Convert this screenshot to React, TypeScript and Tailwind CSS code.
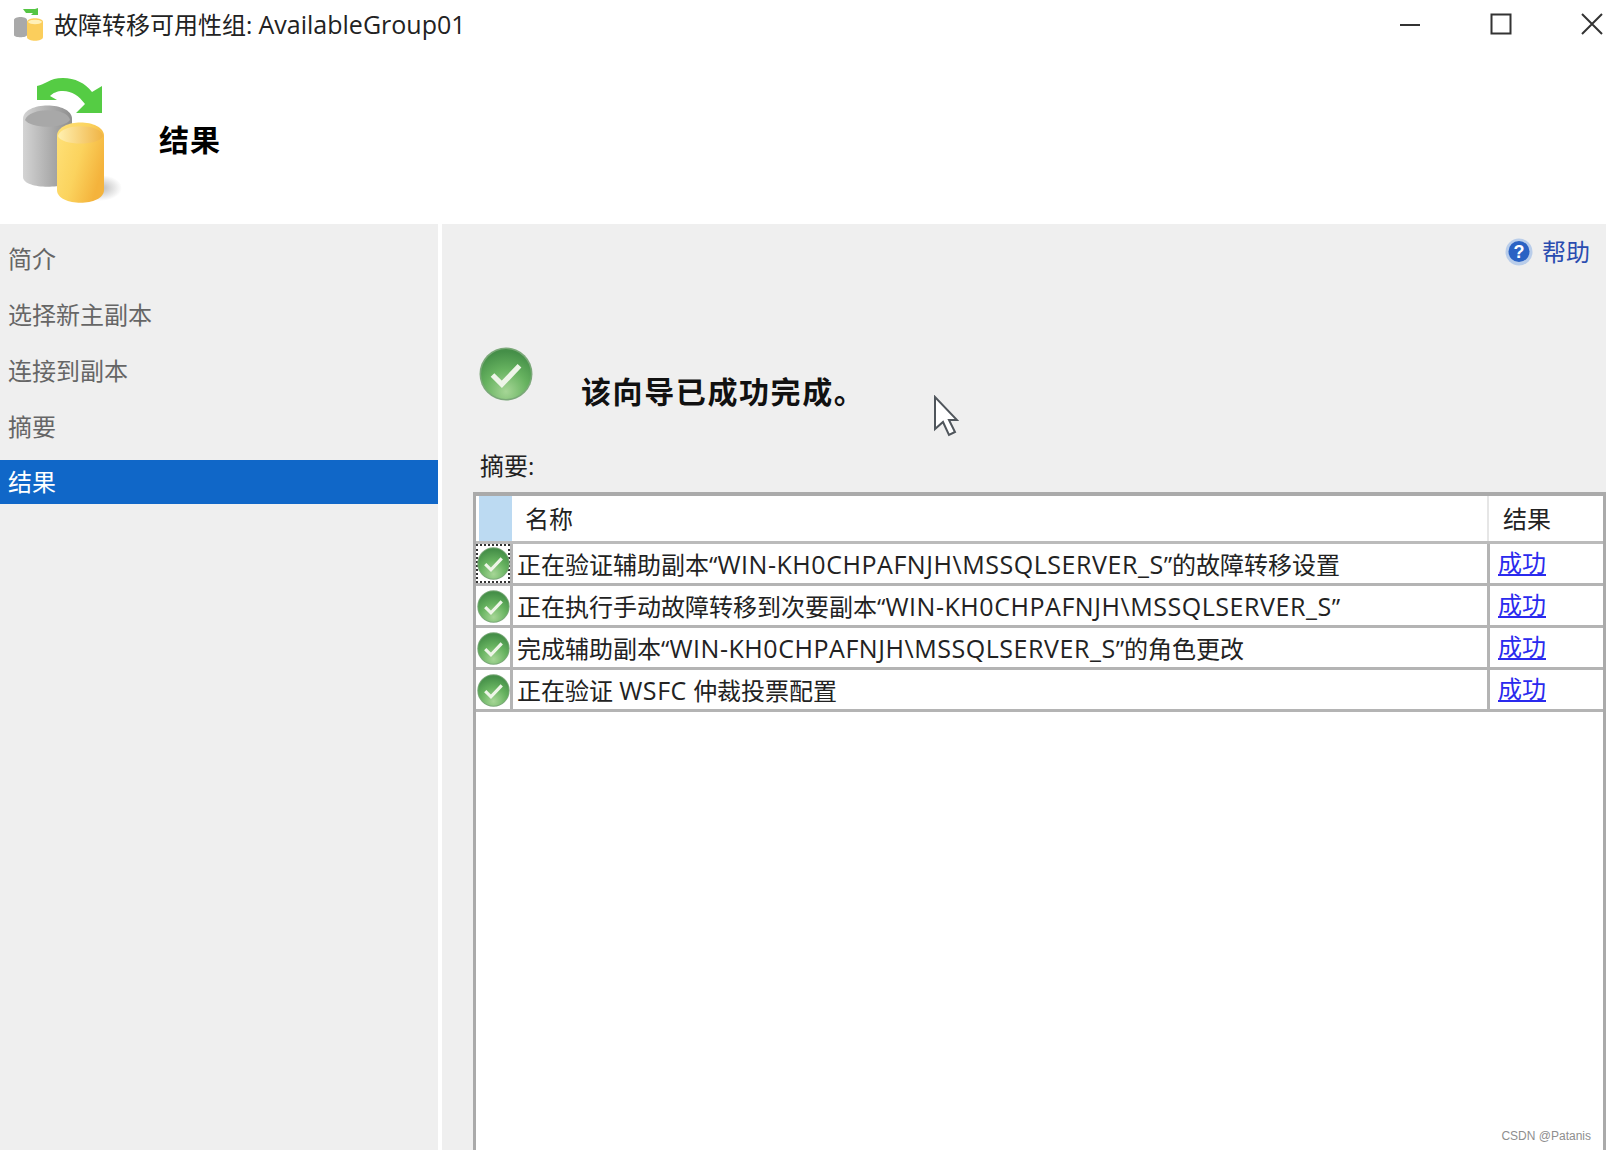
import { useId, type ReactNode } from 'react'

const steps = ['简介', '选择新主副本', '连接到副本', '摘要', '结果']

// Latin runs are set a touch larger, the original UI font is wider than Open Sans
function Latin({ children }: { children: ReactNode }) {
  return <span className="text-[25px] tracking-[0.55px]">{children}</span>
}

const server = <Latin>WIN-KH0CHPAFNJH\MSSQLSERVER_S</Latin>

const rows = [
  <>正在验证辅助副本“{server}”的故障转移设置</>,
  <>正在执行手动故障转移到次要副本“{server}”</>,
  <>完成辅助副本“{server}”的角色更改</>,
  <>正在验证 <Latin>WSFC</Latin> 仲裁投票配置</>,
]

function CheckIcon({ size }: { size: number }) {
  const id = useId()
  return (
    <svg width={size} height={size} viewBox="0 0 52 52" className="shrink-0">
      <defs>
        <radialGradient id={id} cx="50%" cy="85%" r="80%">
          <stop offset="0%" stopColor="#a6d696" />
          <stop offset="55%" stopColor="#66b25f" />
          <stop offset="100%" stopColor="#458f48" />
        </radialGradient>
      </defs>
      <circle cx="26" cy="26" r="25.5" fill="#7aa878" />
      <circle cx="26" cy="26" r="24" fill={`url(#${id})`} />
      <path d="M13 27l9 9 17-18" fill="none" stroke="#eef5e8" strokeWidth="5" />
    </svg>
  )
}

function DbIcon() {
  return (
    <svg width="100" height="130" viewBox="0 0 100 130">
      <defs>
        <linearGradient id="dbGray" x1="0" x2="1" y1="0" y2="0">
          <stop offset="0%" stopColor="#d4d4d4" />
          <stop offset="45%" stopColor="#b4b4b4" />
          <stop offset="100%" stopColor="#8d8d8d" />
        </linearGradient>
        <linearGradient id="dbYellow" x1="0" x2="1" y1="0" y2="0.5">
          <stop offset="0%" stopColor="#ffe27a" />
          <stop offset="55%" stopColor="#fbd35e" />
          <stop offset="100%" stopColor="#f4b33c" />
        </linearGradient>
        <linearGradient id="dbTop" x1="0" x2="1" y1="0" y2="0">
          <stop offset="0%" stopColor="#fff0b0" />
          <stop offset="100%" stopColor="#f0b445" />
        </linearGradient>
        <radialGradient id="dbShadow">
          <stop offset="0%" stopColor="#9a9a9a" stopOpacity="0.7" />
          <stop offset="100%" stopColor="#9a9a9a" stopOpacity="0" />
        </radialGradient>
      </defs>
      <ellipse cx="78" cy="112" rx="22" ry="13" fill="url(#dbShadow)" />
      <path d="M1 43c0-18 49-18 49 0v58c0 13-49 13-49 0z" fill="url(#dbGray)" />
      <path d="M3 44c4-13 43-13 45 0c-6 9-39 9-45 0z" fill="#a8a8a8" />
      <path d="M35 60c0-18 47-18 47 0v54c0 17-47 17-47 0z" fill="url(#dbYellow)" />
      <path d="M36 60c3-13 43-13 45 0c-3 10-42 10-45 0z" fill="url(#dbTop)" />
      <path d="M15 10c8-1 12-8 26-8c12 0 22 5 29 14l10-6v27H54l9-9c-6-8-13-13-22-13c-6 0-10 2-13 5l7 4H15z" fill="#55cc44" />
    </svg>
  )
}

function TitleIcon() {
  return (
    <svg width="31" height="34" viewBox="0 0 31 34">
      <path d="M10 2h12l3-1v7h-7l2-2h-7z" fill="#55c544" />
      <path d="M1 13c0-4 13-4 13 0v15c0 3-13 3-13 0z" fill="#a9a9a9" />
      <path d="M14 15c0-5 16-5 16 0v15c0 5-16 5-16 0z" fill="#fbce5c" />
      <path d="M15 15c1-3 13-3 14 0c-2 3-12 3-14 0z" fill="#fff0b8" />
    </svg>
  )
}

function CursorIcon() {
  return (
    <svg width="26" height="42" viewBox="0 0 26 42">
      <path d="M2 2v32l8-7 6 13 6-3-6-12h8z" fill="#fff" stroke="#50565c" strokeWidth="2" />
    </svg>
  )
}

function HelpIcon() {
  return (
    <svg width="28" height="28" viewBox="0 0 28 28">
      <circle cx="14" cy="14" r="13.5" fill="#b9cdea" />
      <circle cx="14" cy="13.5" r="10.5" fill="#2a62c4" />
      <text x="14" y="20" textAnchor="middle" fontSize="18" fontWeight="700" fill="#fff" fontFamily="Liberation Sans">?</text>
    </svg>
  )
}

export default function App() {
  return (
    <div className="relative flex h-[1150px] w-full flex-col overflow-hidden bg-white font-['Open_Sans','Noto_Sans_CJK_SC',sans-serif] text-[24px] leading-none text-[#222]">
      {/* title bar */}
      <div className="flex h-[50px] items-center pb-[2px] pl-[13px]">
        <div className="mr-[10px]">
          <TitleIcon />
        </div>
        <span>故障转移可用性组: <span className="text-[25px]">AvailableGroup01</span></span>
        <div className="ml-auto flex items-center">
          <svg width="22" height="22" viewBox="0 0 22 22" className="mr-[69px]">
            <path d="M1 12h20" stroke="#333" strokeWidth="2" />
          </svg>
          <svg width="22" height="22" viewBox="0 0 22 22" className="mr-[69px]">
            <rect x="1.5" y="1.5" width="19" height="19" fill="none" stroke="#333" strokeWidth="2" />
          </svg>
          <svg width="22" height="22" viewBox="0 0 22 22" className="mr-[3px]">
            <path d="M1 1l20 20M21 1L1 21" stroke="#333" strokeWidth="2" />
          </svg>
        </div>
      </div>

      {/* wizard header */}
      <div className="flex h-[174px] items-start pl-[22px] pt-[26px]">
        <DbIcon />
        <span className="ml-[37px] mt-[49px] text-[30px] font-bold tracking-[1px] text-black">结果</span>
      </div>

      <div className="flex min-h-0 flex-1 gap-1">
        {/* step list */}
        <div className="flex w-[438px] shrink-0 flex-col gap-3 bg-[#efefef] pt-[13px]">
          {steps.map((step, i) => (
            <div
              key={step}
              className={
                i === 4
                  ? '-mt-px flex h-[44px] items-center bg-[#1067c8] pl-2 text-white'
                  : 'flex h-[44px] items-center pl-2 text-[#666]'
              }
            >
              {step}
            </div>
          ))}
        </div>

        {/* results panel */}
        <div className="flex min-w-0 flex-1 flex-col bg-[#efefef] pl-[31px]">
          <div className="mt-[14px] flex h-[28px] items-center justify-end gap-[9px] pr-4 text-[#2a4cb0]">
            <HelpIcon />
            <span>帮助</span>
          </div>
          <div className="mt-[81px] flex h-[52px] items-start pl-[6px]">
            <CheckIcon size={54} />
            <span className="ml-[48px] mt-[30px] whitespace-nowrap text-[30px] font-bold tracking-[1.6px] text-[#111]">该向导已成功完成。</span>
          </div>
          <div className="mt-[53px] pl-[7px] leading-[28px]">摘要:</div>

          <div className="mt-[12px] flex min-h-0 flex-1 flex-col border-x-[3px] border-t-[4px] border-[#aaaaaa] bg-white">
            <div className="flex h-[48px] shrink-0 border-b-[3px] border-[#bbbbbb]">
              <div className="ml-[3px] w-[33px] shrink-0 bg-[#bcdaf2]" />
              <div className="flex flex-1 items-center pl-[13px]">名称</div>
              <div className="flex w-[116px] shrink-0 items-center border-l-2 border-[#e6e6e6] pl-[14px]">结果</div>
            </div>
            {rows.map((row, i) => (
              <div key={i} className="flex h-[42px] shrink-0 border-b-[3px] border-[#b4b4b4]">
                <div
                  className={
                    i === 0
                      ? 'flex w-[34px] shrink-0 items-center justify-center border-2 border-dotted border-[#333]'
                      : 'flex w-[34px] shrink-0 items-center justify-center pt-[1px]'
                  }
                >
                  <CheckIcon size={33} />
                </div>
                <div className="flex flex-1 items-center border-l-[3px] border-[#b4b4b4] pl-[4px] pt-[2px] whitespace-pre">
                  <span>{row}</span>
                </div>
                <div className="flex w-[116px] shrink-0 items-center border-l-[3px] border-[#b4b4b4] pb-[2px] pl-[8px]">
                  <a className="text-[#2a2aee] underline">成功</a>
                </div>
              </div>
            ))}
          </div>
        </div>
      </div>

      {/* pointer caught in the screenshot */}
      <div className="absolute left-[933px] top-[395px]">
        <CursorIcon />
      </div>
      <div className="absolute bottom-[8px] right-[15px] font-['Liberation_Sans',sans-serif] text-[12px] text-[#8e8e8e]">CSDN @Patanis</div>
    </div>
  )
}
